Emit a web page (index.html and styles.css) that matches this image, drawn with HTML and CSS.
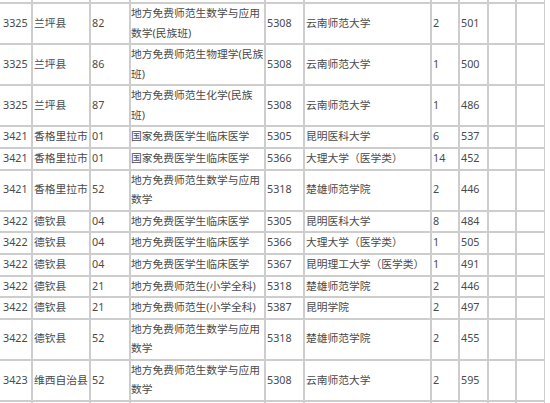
FILE: index.html
```html
<!DOCTYPE html>
<html lang="zh-CN">
<head>
<meta charset="utf-8">
<title>招生录取表</title>
<link rel="stylesheet" href="styles.css">
</head>
<body>
<table class="grid">
<tbody>
<tr class="edge-row">
<td class="c1">&nbsp;</td><td class="c2">&nbsp;</td><td class="c3">&nbsp;</td><td class="c4">&nbsp;</td><td class="c5">&nbsp;</td><td class="c6">&nbsp;</td><td class="c7">&nbsp;</td><td class="c8">&nbsp;</td><td class="c9">&nbsp;</td><td class="c10">&nbsp;</td>
</tr>
<tr><td class="c1">3325</td><td>兰坪县</td><td>82</td><td class="c4">地方免费师范生数学与应用数学(民族班)</td><td>5308</td><td>云南师范大学</td><td>2</td><td>501</td><td></td><td></td></tr>
<tr><td class="c1">3325</td><td>兰坪县</td><td>86</td><td class="c4">地方免费师范生物理学(民族班)</td><td>5308</td><td>云南师范大学</td><td>1</td><td>500</td><td></td><td></td></tr>
<tr><td class="c1">3325</td><td>兰坪县</td><td>87</td><td class="c4">地方免费师范生化学(民族班)</td><td>5308</td><td>云南师范大学</td><td>1</td><td>486</td><td></td><td></td></tr>
<tr><td class="c1">3421</td><td>香格里拉市</td><td>01</td><td class="c4">国家免费医学生临床医学</td><td>5305</td><td>昆明医科大学</td><td>6</td><td>537</td><td></td><td></td></tr>
<tr><td class="c1">3421</td><td>香格里拉市</td><td>01</td><td class="c4">国家免费医学生临床医学</td><td>5366</td><td>大理大学（医学类）</td><td>14</td><td>452</td><td></td><td></td></tr>
<tr><td class="c1">3421</td><td>香格里拉市</td><td>52</td><td class="c4">地方免费师范生数学与应用数学</td><td>5318</td><td>楚雄师范学院</td><td>2</td><td>446</td><td></td><td></td></tr>
<tr><td class="c1">3422</td><td>德钦县</td><td>04</td><td class="c4">地方免费医学生临床医学</td><td>5305</td><td>昆明医科大学</td><td>8</td><td>484</td><td></td><td></td></tr>
<tr><td class="c1">3422</td><td>德钦县</td><td>04</td><td class="c4">地方免费医学生临床医学</td><td>5366</td><td>大理大学（医学类）</td><td>1</td><td>505</td><td></td><td></td></tr>
<tr><td class="c1">3422</td><td>德钦县</td><td>04</td><td class="c4">地方免费医学生临床医学</td><td>5367</td><td>昆明理工大学（医学类）</td><td>1</td><td>491</td><td></td><td></td></tr>
<tr><td class="c1">3422</td><td>德钦县</td><td>21</td><td class="c4">地方免费师范生(小学全科)</td><td>5318</td><td>楚雄师范学院</td><td>2</td><td>446</td><td></td><td></td></tr>
<tr><td class="c1">3422</td><td>德钦县</td><td>21</td><td class="c4">地方免费师范生(小学全科)</td><td>5387</td><td>昆明学院</td><td>2</td><td>497</td><td></td><td></td></tr>
<tr><td class="c1">3422</td><td>德钦县</td><td>52</td><td class="c4">地方免费师范生数学与应用数学</td><td>5318</td><td>楚雄师范学院</td><td>2</td><td>455</td><td></td><td></td></tr>
<tr><td class="c1">3423</td><td>维西自治县</td><td>52</td><td class="c4">地方免费师范生数学与应用数学</td><td>5308</td><td>云南师范大学</td><td>2</td><td>595</td><td></td><td></td></tr>
<tr class="edge-row"><td class="c1">&nbsp;</td><td>&nbsp;</td><td>&nbsp;</td><td class="c4">&nbsp;</td><td>&nbsp;</td><td>&nbsp;</td><td>&nbsp;</td><td>&nbsp;</td><td></td><td></td></tr>
</tbody>
</table>
</body>
</html>
```
FILE: styles.css
```css
html, body {
  margin: 0;
  padding: 0;
  background: #ffffff;
  overflow: hidden;
}

.grid {
  table-layout: fixed;
  border-collapse: separate;
  border-spacing: 0;
  width: 547px;
  margin-left: -2px;
  margin-top: -18.6px;
  font-family: "Noto Sans", "Noto Sans CJK SC", sans-serif;
  font-size: 10.75px;
  line-height: 19.58px;
  color: #4a4a4a;
}

.grid td {
  box-sizing: border-box;
  border: 1px solid #cdcdcd;
  padding: 0 1px;
  vertical-align: middle;
  text-align: left;
  white-space: normal;
  overflow: hidden;
}

.grid td.c1 { padding-left: 4px; }
.grid td.c4 { padding: 0; }

.c1 { width: 34px; }
.c2 { width: 58px; }
.c3 { width: 40px; }
.c4 { width: 135px; }
.c5 { width: 39px; }
.c6 { width: 127px; }
.c7 { width: 28px; }
.c8 { width: 29px; }
.c9 { width: 28px; }
.c10 { width: 29px; }
```
